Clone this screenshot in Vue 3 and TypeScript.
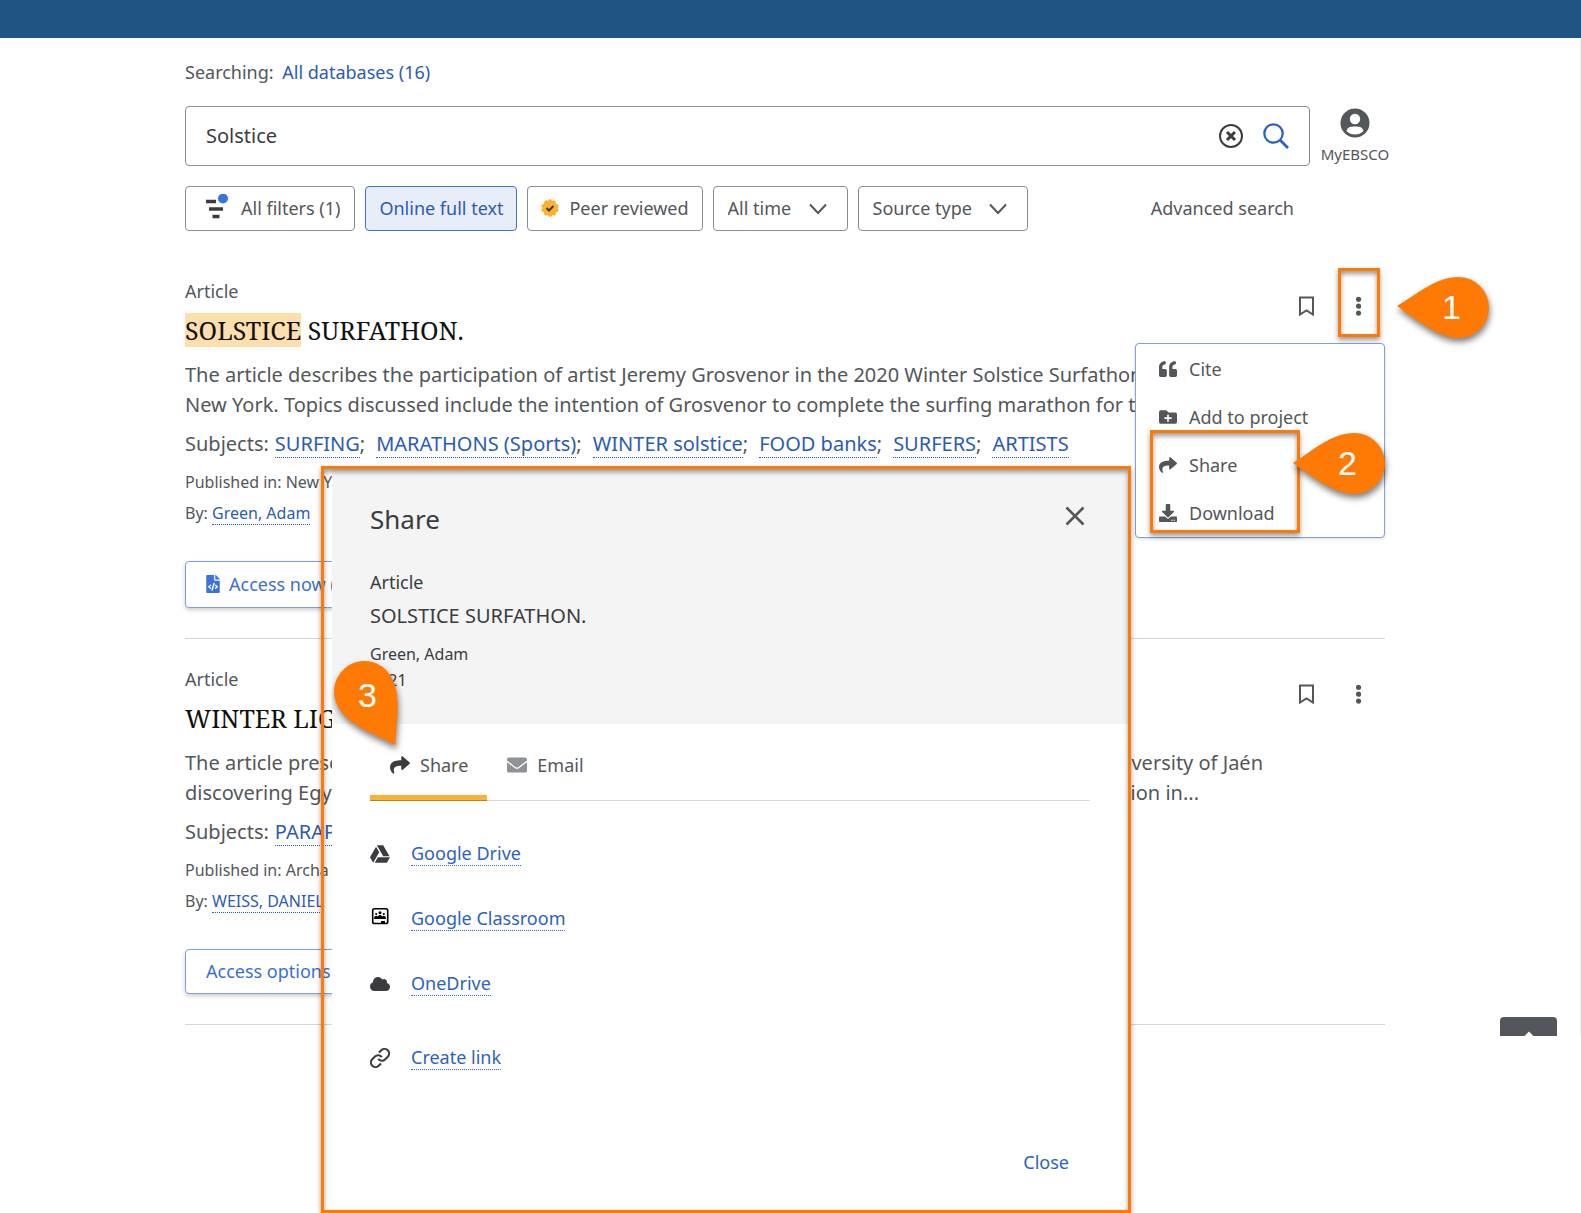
<script setup lang="ts">
import { ref } from 'vue'

interface LinkItem {
  label: string
  icon: string
}

interface MenuItem {
  label: string
  path: string
}

interface Result {
  title: string
  mark: string
  lines: string[][]
  subjects: string[]
  published: string
  author: string
  access: string
  file: boolean
}

const query = ref('Solstice')
const period = ref('All time')
const source = ref('Source type')

const sharePath =
  'M503.691 189.836L327.687 37.851C312.281 24.546 288 35.347 288 56.015v80.053C127.371 137.907 0 170.1 0 322.326c0 61.441 39.581 122.309 83.333 154.132 13.653 9.931 33.111-2.533 28.077-18.631C66.066 312.814 132.917 274.316 288 272.085V360c0 20.7 24.3 31.453 39.687 18.164l176.004-152c11.071-9.562 11.086-26.753 0-36.328z'

const menu: MenuItem[] = [
  {
    label: 'Cite',
    path: 'M464 256h-80v-64c0-35.3 28.7-64 64-64h8c13.3 0 24-10.7 24-24V56c0-13.3-10.7-24-24-24h-8c-88.4 0-160 71.6-160 160v240c0 26.5 21.5 48 48 48h128c26.5 0 48-21.5 48-48V304c0-26.5-21.5-48-48-48zm-288 0H96v-64c0-35.3 28.7-64 64-64h8c13.3 0 24-10.7 24-24V56c0-13.3-10.7-24-24-24h-8C71.6 32 0 103.6 0 192v240c0 26.5 21.5 48 48 48h128c26.5 0 48-21.5 48-48V304c0-26.5-21.5-48-48-48z',
  },
  {
    label: 'Add to project',
    path: 'M464,128H272L208,64H48A48,48,0,0,0,0,112V400a48,48,0,0,0,48,48H464a48,48,0,0,0,48-48V176A48,48,0,0,0,464,128ZM359.5,296a16,16,0,0,1-16,16h-64v64a16,16,0,0,1-16,16h-16a16,16,0,0,1-16-16V312h-64a16,16,0,0,1-16-16V280a16,16,0,0,1,16-16h64V200a16,16,0,0,1,16-16h16a16,16,0,0,1,16,16v64h64a16,16,0,0,1,16,16Z',
  },
  { label: 'Share', path: sharePath },
  {
    label: 'Download',
    path: 'M216 0h80c13.3 0 24 10.7 24 24v168h87.7c17.8 0 26.7 21.5 14.1 34.1L269.7 378.3c-7.5 7.5-19.8 7.5-27.3 0L90.1 226.1c-12.6-12.6-3.7-34.1 14.1-34.1H192V24c0-13.3 10.7-24 24-24zm296 376v112c0 13.3-10.7 24-24 24H24c-13.3 0-24-10.7-24-24V376c0-13.3 10.7-24 24-24h146.7l49 49c20.1 20.1 52.5 20.1 72.6 0l49-49H488c13.3 0 24 10.7 24 24zm-124 88c0-11-9-20-20-20s-20 9-20 20 9 20 20 20 20-9 20-20zm64 0c0-11-9-20-20-20s-20 9-20 20 9 20 20 20 20-9 20-20z',
  },
]

const results: Result[] = [
  {
    mark: 'SOLSTICE',
    title: ' SURFATHON.',
    lines: [
      ['The article describes the participation of artist Jeremy Grosvenor in the 2020 Winter Solstice Surfathon'],
      ['New York. Topics discussed include the intention of Grosvenor to complete the surfing marathon for t'],
    ],
    subjects: ['SURFING', 'MARATHONS (Sports)', 'WINTER solstice', 'FOOD banks', 'SURFERS', 'ARTISTS'],
    published: 'New Y',
    author: 'Green, Adam',
    access: 'Access now (',
    file: true,
  },
  {
    mark: '',
    title: 'WINTER LIG',
    lines: [
      ['The article prese', 'versity of Jaén'],
      ['discovering Egy', 'ion in...'],
    ],
    subjects: ['PARAP'],
    published: 'Archa',
    author: 'WEISS, DANIEL',
    access: 'Access options',
    file: false,
  },
]

const shareLinks: LinkItem[] = [
  { label: 'Google Drive', icon: 'drive' },
  { label: 'Google Classroom', icon: 'classroom' },
  { label: 'OneDrive', icon: 'cloud' },
  { label: 'Create link', icon: 'link' },
]
</script>

<template>
  <div class="page">
    <header class="topbar"></header>
    <div class="viewport">
      <main class="content">
        <p class="searching">Searching: <a href="#">All databases (16)</a></p>

        <div class="search-row">
          <div class="search-box">
            <input v-model="query" type="text" aria-label="Search" />
            <button class="bare" aria-label="Clear search">
              <svg width="24" height="24" viewBox="0 0 24 24" fill="none" stroke="#3a3c3f">
                <circle cx="12" cy="12" r="11" stroke-width="2" />
                <path d="M8 8l8 8M16 8l-8 8" stroke-width="3" />
              </svg>
            </button>
            <button class="bare" aria-label="Submit search">
              <svg width="26" height="26" viewBox="0 0 26 26" fill="none" stroke="#2a63c4" stroke-width="2.300">
                <circle cx="10.500" cy="10.500" r="9.200" />
                <path d="M17 17l8 8" stroke-width="2.800" />
              </svg>
            </button>
          </div>
          <a class="account" href="#">
            <svg width="30" height="30" viewBox="0 0 30 30">
              <circle cx="15" cy="15" r="14.500" fill="#53565a" />
              <circle cx="15" cy="11" r="5.200" fill="#fff" />
              <path d="M6.500 23c1-4 4-4.500 8.500-4.500s7.500.5 8.500 4.500a12 12 0 0 1-17 0z" fill="#fff" />
            </svg>
            <span>MyEBSCO</span>
          </a>
        </div>

        <div class="filters">
          <button class="chip all">
            <svg width="24" height="28" viewBox="0 0 24 28">
              <path d="M1 7.500h10M4 15h14M7.500 22.500h7" stroke="#3a3c3f" stroke-width="3.700" />
              <circle cx="18" cy="4.500" r="6.500" fill="#fff" />
              <circle cx="18" cy="4.500" r="5" fill="#3b74d4" />
            </svg>
            All filters (1)
          </button>
          <button class="chip active">Online full text</button>
          <button class="chip peer">
            <svg width="18" height="18" viewBox="0 0 18 18">
              <g fill="#fbb134">
                <circle cx="9" cy="9" r="7.200" />
                <circle v-for="n in 10" :key="n" cx="9" cy="2.500" r="2.300" :transform="`rotate(${n * 36} 9 9)`" />
              </g>
              <path d="M5.500 9l2.500 2.500 4.500-4.500" fill="none" stroke="#3a3c3f" stroke-width="2" />
            </svg>
            Peer reviewed
          </button>
          <div class="picker period">
            <select v-model="period" aria-label="Publication date">
              <option>All time</option>
            </select>
            <svg width="18" height="12" viewBox="0 0 18 12"><path d="M1 1.500l8 8.500 8-8.500" /></svg>
          </div>
          <div class="picker source">
            <select v-model="source" aria-label="Source type">
              <option>Source type</option>
            </select>
            <svg width="18" height="12" viewBox="0 0 18 12"><path d="M1 1.500l8 8.500 8-8.500" /></svg>
          </div>
          <a class="advanced" href="#">Advanced search</a>
        </div>

        <article v-for="(r, i) in results" :key="i" class="result">
          <div class="result-head">
            <div>
              <p class="kind">Article</p>
              <h2><mark v-if="r.mark">{{ r.mark }}</mark>{{ r.title }}</h2>
            </div>
            <div class="actions">
              <button class="bare" aria-label="Save">
                <svg width="16" height="20" viewBox="0 0 16 20" fill="none" stroke="#53565a" stroke-width="2">
                  <path d="M1 18.500V1.500h13v17L7.500 14.500z" />
                </svg>
              </button>
              <button class="bare" aria-label="More options">
                <svg width="6" height="20" viewBox="0 0 6 20" fill="#53565a">
                  <circle cx="2.500" cy="3.300" r="2.600" />
                  <circle cx="2.500" cy="10.200" r="2.600" />
                  <circle cx="2.500" cy="17.100" r="2.600" />
                </svg>
              </button>
            </div>
          </div>
          <div class="abstract" :class="{ paired: i === 1 }">
            <p v-for="(line, n) in r.lines" :key="n">
              <span v-for="part in line" :key="part">{{ part }}</span>
            </p>
          </div>
          <p class="subjects">
            <span>Subjects:</span>
            <span v-for="(s, n) in r.subjects" :key="s" class="subject"><a href="#">{{ s }}</a>{{ n < r.subjects.length - 1 ? ';' : '' }}</span>
          </p>
          <p class="meta">Published in: {{ r.published }}</p>
          <p class="meta by">By: <a href="#">{{ r.author }}</a></p>
          <button class="access" :class="{ file: r.file }">
            <svg v-if="r.file" width="14" height="18" viewBox="0 0 384 512" fill="#3b74d4">
              <path d="M384 121.941V128H256V0h6.059c6.365 0 12.470 2.529 16.971 7.029l97.941 97.941A24.005 24.005 0 0 1 384 121.941zM248 160c-13.200 0-24-10.800-24-24V0H24C10.745 0 0 10.745 0 24v464c0 13.255 10.745 24 24 24h336c13.255 0 24-10.745 24-24V160H248zM123.206 400.505a5.400 5.400 0 0 1-7.633.246l-64.866-60.812a5.400 5.400 0 0 1 0-7.879l64.866-60.812a5.400 5.400 0 0 1 7.633.246l19.579 20.885a5.400 5.400 0 0 1-.372 7.747L101.650 336l40.763 35.874a5.400 5.400 0 0 1 .372 7.747l-19.579 20.884zm51.295 50.479l-27.453-7.970a5.402 5.402 0 0 1-3.681-6.692l61.440-211.626a5.402 5.402 0 0 1 6.692-3.681l27.452 7.970a5.400 5.400 0 0 1 3.680 6.692l-61.440 211.626a5.397 5.397 0 0 1-6.690 3.681zm160.792-111.045l-64.866 60.812a5.400 5.400 0 0 1-7.633-.246l-19.580-20.885a5.400 5.400 0 0 1 .372-7.747L284.350 336l-40.763-35.874a5.400 5.400 0 0 1-.372-7.747l19.580-20.885a5.400 5.400 0 0 1 7.633-.246l64.866 60.812a5.400 5.400 0 0 1-.001 7.879z" />
            </svg>
            {{ r.access }}
          </button>
        </article>

        <!-- Options menu of the first result -->
        <div class="menu" role="menu">
          <button v-for="m in menu" :key="m.label" role="menuitem">
            <svg width="18" height="18" viewBox="0 0 512 512"><path :d="m.path" /></svg>
            {{ m.label }}
          </button>
        </div>

        <!-- Share dialog, inside its highlight frame -->
        <div class="frame">
          <section class="dialog" role="dialog" aria-labelledby="share-title">
            <div class="dialog-head">
              <div class="dialog-title">
                <h1 id="share-title">Share</h1>
                <button class="bare" aria-label="Close dialog">
                  <svg width="20" height="20" viewBox="0 0 20 20" stroke="#53565a" stroke-width="2.600">
                    <path d="M1.500 1.500l17 17M18.500 1.500l-17 17" />
                  </svg>
                </button>
              </div>
              <p class="d-kind">Article</p>
              <p class="d-name">SOLSTICE SURFATHON.</p>
              <p class="d-meta">Green, Adam</p>
              <p class="d-meta">2021</p>
            </div>
            <div class="dialog-body">
              <div class="tabs" role="tablist">
                <button class="tab selected" role="tab" aria-selected="true">
                  <svg width="20" height="20" viewBox="0 0 512 512" fill="#3a3c3f"><path :d="sharePath" /></svg>
                  Share
                </button>
                <button class="tab" role="tab" aria-selected="false">
                  <svg width="20" height="20" viewBox="0 0 512 512" fill="#8f9297">
                    <path d="M502.300 190.800c3.900-3.100 9.700-.2 9.700 4.700V400c0 26.500-21.500 48-48 48H48c-26.500 0-48-21.500-48-48V195.600c0-5 5.700-7.800 9.700-4.700 22.400 17.400 52.100 39.500 154.100 113.600 21.100 15.400 56.700 47.800 92.200 47.600 35.700.3 72-32.800 92.300-47.600 102-74.100 131.600-96.300 154-113.700zM256 320c23.200.4 56.600-29.200 73.400-41.400 132.700-96.300 142.800-104.700 173.400-128.700 5.800-4.500 9.200-11.500 9.200-18.900v-19c0-26.500-21.500-48-48-48H48c-26.500 0-48 21.500-48 48v19c0 7.400 3.400 14.300 9.200 18.900 30.600 23.900 40.700 32.400 173.400 128.700 16.800 12.200 50.200 41.800 73.400 41.400z" />
                  </svg>
                  Email
                </button>
              </div>
              <ul class="share-links">
                <li v-for="l in shareLinks" :key="l.icon" :class="l.icon">
                  <svg v-if="l.icon === 'drive'" width="20" height="20" viewBox="0 0 512 512" fill="#3a3c3f">
                    <path d="M339 314.900L175.400 32h161.200l163.600 282.900H339zm-137.500 23.600L120.900 480h310.500L512 338.500H201.500zM154.100 67.400L0 338.500 80.600 480 237 208.800 154.100 67.400z" />
                  </svg>
                  <svg v-else-if="l.icon === 'classroom'" width="20" height="20" viewBox="0 0 20 20">
                    <rect x="2.700" y="2.700" width="15" height="14.800" rx="1.800" fill="none" stroke="#000" stroke-width="1.600" />
                    <circle cx="10" cy="6.700" r="1.500" />
                    <circle cx="6.200" cy="8" r="1.100" />
                    <circle cx="13.800" cy="8" r="1.100" />
                    <path d="M4.200 13v-2q2-2 3.600-.6Q10 7.500 12.200 10.400q1.600-1.400 3.600.6v2zM11 15h4v2.500h-4z" />
                  </svg>
                  <svg v-else-if="l.icon === 'cloud'" width="20" height="20" viewBox="0 0 640 512" fill="#3a3c3f">
                    <path d="M537.600 226.600c4.100-10.700 6.400-22.400 6.400-34.600 0-53-43-96-96-96-19.700 0-38.100 6-53.300 16.200C367 64.200 315.300 32 256 32c-88.400 0-160 71.600-160 160 0 2.700.1 5.400.2 8.100C40.200 219.800 0 273.200 0 336c0 79.500 64.500 144 144 144h368c70.700 0 128-57.300 128-128 0-61.900-44-113.600-102.400-125.400z" />
                  </svg>
                  <svg v-else width="20" height="20" viewBox="1 1 22 22" fill="none" stroke="#3a3c3f" stroke-width="2.300">
                    <path d="M10 13a5 5 0 0 0 7.540.54l3-3a5 5 0 0 0-7.070-7.070l-2.600 2.600" />
                    <path d="M14 11a5 5 0 0 0-7.540-.54l-3 3a5 5 0 0 0 7.070 7.070l2.600-2.600" />
                  </svg>
                  <a href="#">{{ l.label }}</a>
                </li>
              </ul>
              <div class="dialog-foot"><button class="bare">Close</button></div>
            </div>
          </section>
        </div>

        <!-- Step annotations -->
        <div class="outline one"></div>
        <div class="outline two"></div>
        <div class="pin p1">
          <svg width="92" height="62" viewBox="0 0 92 62"><path d="M0 29C22 16 39 0 61.500 0a30.500 30.500 0 0 1 0 61C41 61 20 43 0 29z" /></svg>
          <span>1</span>
        </div>
        <div class="pin p2">
          <svg width="92" height="62" viewBox="0 0 92 62"><path d="M0 30C22 16 39 0 61.500 0a30.500 30.500 0 0 1 0 61C41 61 20 44 0 30z" /></svg>
          <span>2</span>
        </div>
        <div class="pin p3">
          <svg width="64" height="86" viewBox="0 0 64 86">
            <path transform="translate(30.500 30.500) rotate(-120)" d="M-62 0C-40-14-22-30.500 0-30.500a30.500 30.500 0 0 1 0 61C-22 30.500-40 14-62 0z" />
          </svg>
          <span>3</span>
        </div>
      </main>
      <button class="to-top" aria-label="Back to top">
        <svg width="20" height="20" viewBox="0 0 20 20" fill="none" stroke="#fff" stroke-width="2">
          <path d="M4 8l6-6 6 6M10 2v16" />
        </svg>
      </button>
    </div>
  </div>
</template>

<style>
body {
  margin: 0;
  background: #fff;
}
</style>

<style scoped>
.page {
  min-height: 100vh;
  color: #53565a;
  font-family: 'Noto Sans', 'Open Sans', sans-serif;
  font-size: 18px;
  line-height: 24px;
}
* {
  box-sizing: border-box;
}
p,
h1,
h2,
ul {
  margin: 0;
  padding: 0;
}
button,
input,
select {
  font: inherit;
  color: inherit;
}
svg {
  flex: none;
  display: block;
}
a {
  color: #2b5bb7;
  text-decoration: none;
}
.bare {
  display: flex;
  align-items: center;
  justify-content: center;
  padding: 0;
  border: 0;
  background: none;
}
.topbar {
  height: 38px;
  background: #205482;
}
.viewport {
  position: relative;
  padding: 22px 10px 11px 0;
  border-right: 1px solid #f0f0f0;
}
.content {
  position: relative;
  max-width: 1200px;
  margin: 0 auto;
}
.searching a {
  margin-left: 4px;
}
.search-row {
  display: flex;
  gap: 11px;
  margin-top: 22px;
}
.search-box {
  flex: 1;
  display: flex;
  align-items: center;
  gap: 20px;
  height: 60px;
  padding: 0 20px;
  border: 1px solid #8b8e92;
  border-radius: 4px;
}
.search-box input {
  flex: 1;
  min-width: 0;
  padding: 0;
  border: 0;
  outline: 0;
  background: none;
  color: #3a3c3f;
  font-size: 20px;
}
.account {
  display: flex;
  flex-direction: column;
  align-items: center;
  gap: 4px;
  width: 68px;
  margin-right: -4px;
  padding-top: 2px;
  color: #53565a;
  font-size: 15px;
}
.filters {
  display: flex;
  align-items: center;
  gap: 10px;
  margin-top: 20px;
}
.chip,
.picker {
  display: flex;
  align-items: center;
  height: 45px;
  padding: 0 13px 2px;
  border: 1px solid #8b8e92;
  border-radius: 4px;
  background: #fff;
  white-space: nowrap;
}
.chip.all {
  gap: 12px;
  padding: 0 14px 2px 19px;
}
.active {
  border-color: #3b74d4;
  background: #e8eef9;
  color: #2b5bb7;
}
.peer {
  gap: 10px;
}
.picker {
  position: relative;
  padding: 0;
}
.picker select {
  height: 43px;
  padding: 0 48px 2px 14px;
  border: 0;
  background: none;
  appearance: none;
}
.period select {
  width: 133px;
}
.source select {
  width: 168px;
}
.picker svg {
  position: absolute;
  right: 20px;
  fill: none;
  stroke: #53565a;
  stroke-width: 2;
  pointer-events: none;
}
.advanced {
  margin-left: auto;
  margin-right: 91px;
  padding-bottom: 2px;
  color: #53565a;
}
.result {
  padding: 28px 0 30px;
  border-bottom: 1px solid #d5d6d8;
}
.filters + .result {
  padding-top: 48px;
}
.result-head {
  display: flex;
  justify-content: space-between;
}
h2 {
  margin-top: 10px;
  color: #111;
  font: 400 25px/34px 'Noto Serif', 'Liberation Serif', serif;
  white-space: pre;
}
mark {
  display: inline-block;
  background: #fddfad;
  color: inherit;
}
.actions {
  display: flex;
  gap: 12px;
  margin: 7px 6px 0 0;
}
.actions .bare {
  width: 40px;
  height: 40px;
}
.abstract {
  margin-top: 13px;
  font-size: 20px;
  line-height: 30px;
  white-space: nowrap;
}
.abstract p {
  display: flex;
  justify-content: space-between;
}
.paired p:first-child {
  max-width: 1078px;
}
.paired p:last-child {
  max-width: 1014px;
}
.subjects {
  display: flex;
  gap: 11px;
  margin-top: 9px;
  font-size: 20px;
  line-height: 30px;
}
.subjects > :first-child {
  margin-right: -5px;
}
.subject a,
.meta a {
  border-bottom: 1px dotted #2b5bb7;
}
.meta {
  margin-top: 11px;
  font-size: 16px;
}
.by {
  margin-top: 7px;
}
.access {
  display: flex;
  align-items: center;
  gap: 9px;
  width: 240px;
  height: 45px;
  margin-top: 36px;
  padding: 0 20px 1px;
  border: 1px solid #7ea0dc;
  border-radius: 4px;
  background: #fff;
  box-shadow: 0 2px 4px rgb(0 0 0 / 20%);
  color: #3b6fd0;
}
.file {
  height: 47px;
}
.menu {
  position: absolute;
  top: 283px;
  right: 0;
  width: 250px;
  padding-top: 1px;
  border: 1px solid #7ea0dc;
  border-radius: 4px;
  background: #fff;
  box-shadow: 0 1px 3px rgb(0 0 0 / 15%);
}
.menu button {
  display: flex;
  align-items: center;
  gap: 12px;
  width: 100%;
  height: 48px;
  padding: 0 23px;
  border: 0;
  background: none;
}
.menu svg {
  fill: #53565a;
}
.frame {
  position: absolute;
  top: 406px;
  left: 136px;
  right: 254px;
  padding-left: 11px;
}
.frame::after,
.outline {
  content: '';
  position: absolute;
  border: 3px solid #ff7a05;
  box-shadow:
    0 3px 5px rgb(0 0 0 / 40%),
    inset 0 3px 5px rgb(0 0 0 / 40%);
  pointer-events: none;
}
.frame::after {
  inset: 0;
}
.dialog {
  background: #fff;
  color: #3a3c3f;
}
.dialog-head {
  height: 258px;
  padding: 36px 46px 0 38px;
  background: #f4f4f4;
}
.dialog-title {
  display: flex;
  justify-content: space-between;
}
h1 {
  font-size: 26px;
  line-height: 34px;
  font-weight: 400;
}
.dialog-title .bare {
  height: 28px;
}
.d-kind {
  margin-top: 34px;
}
.d-name {
  margin-top: 7px;
  font-size: 20px;
  line-height: 30px;
}
.d-meta {
  margin-top: 2px;
  font-size: 16px;
}
.d-name + .d-meta {
  margin-top: 11px;
}
.dialog-body {
  padding: 16px 41px 39px 38px;
}
.tabs {
  display: flex;
  border-bottom: 1px solid #d5d6d8;
}
.tab {
  display: flex;
  align-items: center;
  gap: 10px;
  height: 60px;
  padding: 0 19px 5px 20px;
  border: 0;
  border-bottom: 5px solid transparent;
  background: none;
  color: #53565a;
}
.selected {
  border-color: #fbb134;
  box-shadow: 0 1px 0 #b9811f;
}
.share-links {
  display: flex;
  flex-direction: column;
  gap: 40px;
  padding-top: 40px;
  list-style: none;
}
.share-links li {
  display: flex;
  align-items: center;
  gap: 21px;
  height: 25px;
}
.share-links .classroom {
  align-items: flex-start;
}
.share-links a {
  border-bottom: 1px dotted #2b6bcf;
  color: #2b63c0;
}
.share-links .link {
  margin-top: 9px;
}
.dialog-foot {
  display: flex;
  justify-content: flex-end;
  margin-top: 80px;
  padding-right: 21px;
}
.dialog-foot .bare {
  color: #2b63c0;
}
.one {
  top: 208px;
  right: 5px;
  width: 42px;
  height: 69px;
}
.two {
  top: 370px;
  right: 85px;
  width: 150px;
  height: 103px;
}
.pin {
  position: absolute;
  color: #fff;
  font: 34px/60px 'Liberation Sans', sans-serif;
}
.pin svg {
  overflow: visible;
  fill: #ff7a05;
  filter: drop-shadow(1px 4px 3px rgb(0 0 0 / 50%));
}
.pin span {
  position: absolute;
  top: 0;
  left: 45px;
}
.p1 {
  top: 217px;
  right: -104px;
}
.p2 {
  top: 373px;
  right: 0;
}
.p3 {
  top: 601px;
  left: 149px;
}
.p3 span {
  left: 24px;
  top: 4px;
}
.to-top {
  position: absolute;
  right: 23px;
  bottom: 0;
  display: flex;
  justify-content: center;
  width: 57px;
  height: 19px;
  padding: 14px 0 0;
  overflow: hidden;
  border: 0;
  border-radius: 4px 4px 0 0;
  background: #53565a;
}
</style>
